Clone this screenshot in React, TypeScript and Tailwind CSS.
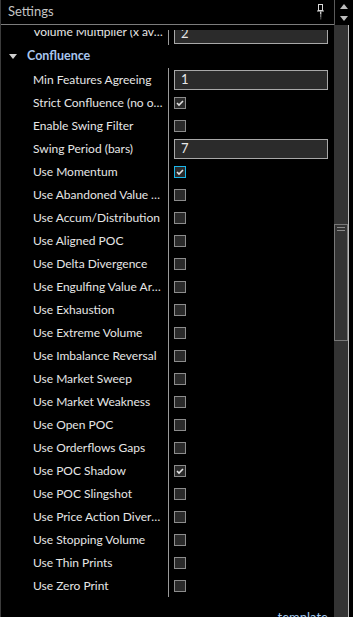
import React from 'react'

type Row =
  | { label: string; kind: 'text'; value: string }
  | { label: string; kind: 'check'; checked?: boolean; focus?: boolean }

const rows: Row[] = [
  { label: 'Min Features Agreeing', kind: 'text', value: '1' },
  { label: 'Strict Confluence (no opposing signals)', kind: 'check', checked: true },
  { label: 'Enable Swing Filter', kind: 'check' },
  { label: 'Swing Period (bars)', kind: 'text', value: '7' },
  { label: 'Use Momentum', kind: 'check', checked: true, focus: true },
  { label: 'Use Abandoned Value Areas', kind: 'check' },
  { label: 'Use Accum/Distribution', kind: 'check' },
  { label: 'Use Aligned POC', kind: 'check' },
  { label: 'Use Delta Divergence', kind: 'check' },
  { label: 'Use Engulfing Value Area', kind: 'check' },
  { label: 'Use Exhaustion', kind: 'check' },
  { label: 'Use Extreme Volume', kind: 'check' },
  { label: 'Use Imbalance Reversal', kind: 'check' },
  { label: 'Use Market Sweep', kind: 'check' },
  { label: 'Use Market Weakness', kind: 'check' },
  { label: 'Use Open POC', kind: 'check' },
  { label: 'Use Orderflows Gaps', kind: 'check' },
  { label: 'Use POC Shadow', kind: 'check', checked: true },
  { label: 'Use POC Slingshot', kind: 'check' },
  { label: 'Use Price Action Divergence', kind: 'check' },
  { label: 'Use Stopping Volume', kind: 'check' },
  { label: 'Use Thin Prints', kind: 'check' },
  { label: 'Use Zero Print', kind: 'check' },
]

function Check({ checked, focus }: { checked?: boolean; focus?: boolean }) {
  return (
    <div
      className={`w-[12px] h-[12px] bg-[#2a2a2a] border flex items-center justify-center ${
        focus ? 'border-[#1bb6ea]' : 'border-[#8c8c8c]'
      }`}
    >
      {checked && (
        <svg width="8" height="8" viewBox="0 0 8 8">
          <path d="M1 4 L3 6 L7 2" fill="none" stroke="#e0e0e0" strokeWidth="1.6" />
        </svg>
      )}
    </div>
  )
}

function Field({ value }: { value: string }) {
  return (
    <div className="w-[154px] h-[20px] bg-[#2b2b2b] border border-[#a8a8a8] flex items-center pl-[6px] text-[13px] text-[#e8e8e8]">
      {value}
    </div>
  )
}

function PropRow({ label, children }: { label: string; children: React.ReactNode }) {
  return (
    <div className="flex h-[23px] items-center">
      <div className="w-[167px] pl-[32px] pr-[5px] truncate text-[12px] text-[#e6e6e6]">{label}</div>
      <div className="h-full w-px bg-[#9a9a9a]" />
      <div className="pl-[5px] flex items-center">{children}</div>
    </div>
  )
}

export default function App() {
  return (
    <div
      className="w-[353px] h-[617px] bg-black overflow-hidden flex border-l border-[#3c3c3c]"
      style={{ fontFamily: 'Lato, "Noto Sans", sans-serif' }}
    >
      <div className="w-[333px] flex flex-col">
        <div className="h-[25px] border-b border-[#7c7c7c] flex items-center pl-[7px] pr-[9px]">
          <span className="text-[13px] text-[#c4c4c4]">Settings</span>
          <div className="ml-auto">
            <svg width="9" height="16" viewBox="0 0 9 16">
              <rect x="2.5" y="0.5" width="4" height="6" fill="none" stroke="#d8d8d8" />
              <rect x="1" y="6.5" width="7" height="1" fill="#d8d8d8" />
              <rect x="4" y="7.5" width="1.4" height="3" fill="#c8c8c8" />
              <rect x="4" y="10.5" width="1.4" height="3" fill="#777" />
              <rect x="4" y="13.5" width="1.4" height="2" fill="#444" />
            </svg>
          </div>
        </div>
        <div className="h-[5px]" />
        <div className="flex-1 overflow-hidden">
          <div className="-mt-[8px]">
            <div className="flex h-[23px] items-center">
              <div className="w-[167px] pl-[32px] pr-[5px] pb-[3px] truncate text-[12px] text-[#e6e6e6]">
                Volume Multiplier (x average)
              </div>
              <div className="h-full w-px bg-[#9a9a9a]" />
              <div className="pl-[5px] flex items-center">
                <Field value="2" />
              </div>
            </div>
            <div className="h-[23px] flex items-center pl-[8px]">
              <svg width="8" height="5" viewBox="0 0 8 5">
                <path d="M0 0 L8 0 L4 5 Z" fill="#cfcfcf" />
              </svg>
              <span className="ml-[10px] text-[12.5px] font-bold text-[#a9c6ee]">Confluence</span>
            </div>
            {rows.map((r) => (
              <PropRow key={r.label} label={r.label}>
                {r.kind === 'text' ? <Field value={r.value} /> : <Check checked={r.checked} focus={r.focus} />}
              </PropRow>
            ))}
            <div className="h-[11px]" />
            <div className="flex justify-end pr-[6px] text-[13px] text-[#a4c8ee]">template</div>
          </div>
        </div>
      </div>
      <div className="w-[19px] flex flex-col">
        <div className="h-[25px] border-l border-[#5a5a5a] flex flex-col items-center justify-between py-[4px]">
          <svg width="8" height="5" viewBox="0 0 8 5">
            <path d="M0 5 L8 5 L4 0 Z" fill="#bdbdbd" />
          </svg>
          <svg width="8" height="5" viewBox="0 0 8 5">
            <path d="M0 0 L8 0 L4 5 Z" fill="#bdbdbd" />
          </svg>
        </div>
        <div className="flex-1 flex">
          <div className="w-[14px] bg-[#333333] flex flex-col">
            <div className="h-[199px]" />
            <div className="h-[117px] border border-[#787878] flex flex-col items-center pt-[2px] gap-[2px]">
              <div className="w-[8px] h-px bg-[#8a8a8a]" />
              <div className="w-[8px] h-px bg-[#8a8a8a]" />
            </div>
          </div>
          <div className="w-px bg-[#bcbcbc]" />
        </div>
      </div>
    </div>
  )
}
